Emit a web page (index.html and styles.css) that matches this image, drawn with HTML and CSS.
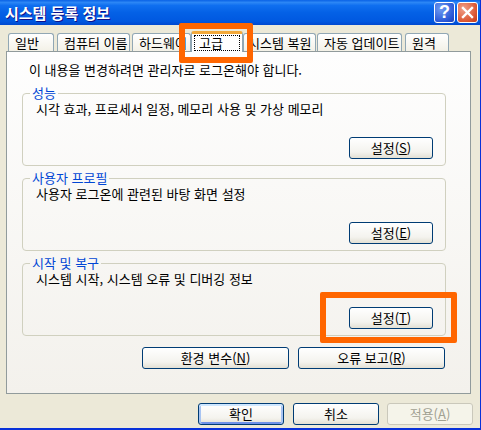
FILE: index.html
```html
<!DOCTYPE html>
<html lang="ko">
<head>
    <meta charset="UTF-8">
    <title>시스템 등록 정보</title>
    <link rel="stylesheet" href="styles.css">
</head>
<body>
    <div class="window">
        <div class="titlebar">
            <span class="title">시스템 등록 정보</span>
            <div class="title-buttons">
                <span class="title-btn help">?</span>
                <span class="title-btn close">
                    <svg width="13" height="13" viewBox="0 0 13 13"><path d="M2 2 L11 11 M11 2 L2 11" stroke="#fff" stroke-width="2.4" stroke-linecap="square"/></svg>
                </span>
            </div>
        </div>

        <div class="tabs">
            <span class="tab tab-general">일반</span>
            <span class="tab tab-name">컴퓨터 이름</span>
            <span class="tab tab-hw">하드웨어</span>
            <span class="tab tab-active"><span class="focus">고급</span></span>
            <span class="tab tab-restore">시스템 복원</span>
            <span class="tab tab-update">자동 업데이트</span>
            <span class="tab tab-remote">원격</span>
        </div>

        <div class="panel">
            <p class="intro">이 내용을 변경하려면 관리자로 로그온해야 합니다.</p>

            <fieldset class="group">
                <legend>성능</legend>
                <p class="group-text">시각 효과, 프로세서 일정, 메모리 사용 및 가상 메모리</p>
                <div class="group-actions"><button class="btn btn-small">설정(<u>S</u>)</button></div>
            </fieldset>

            <fieldset class="group">
                <legend>사용자 프로필</legend>
                <p class="group-text">사용자 로그온에 관련된 바탕 화면 설정</p>
                <div class="group-actions"><button class="btn btn-small">설정(<u>E</u>)</button></div>
            </fieldset>

            <fieldset class="group">
                <legend>시작 및 복구</legend>
                <p class="group-text">시스템 시작, 시스템 오류 및 디버깅 정보</p>
                <div class="group-actions"><button class="btn btn-small">설정(<u>T</u>)</button></div>
            </fieldset>

            <div class="panel-actions">
                <button class="btn btn-wide">환경 변수(<u>N</u>)</button>
                <button class="btn btn-wide">오류 보고(<u>R</u>)</button>
            </div>
        </div>

        <div class="footer">
            <button class="btn btn-footer btn-default">확인</button>
            <button class="btn btn-footer">취소</button>
            <button class="btn btn-footer" disabled>적용(<u>A</u>)</button>
        </div>

        <!-- Orange callouts drawn over the dialog -->
        <div class="callout callout-tab"></div>
        <div class="callout callout-button"></div>
    </div>
</body>
</html>
```

FILE: styles.css
```css
* {
    box-sizing: border-box;
}
body {
    margin: 0;
    font-family: "Noto Sans CJK KR", "Liberation Sans", sans-serif;
    font-size: 13px;
    color: #000;
}
p {
    margin: 0;
}
.window {
    position: relative;
    width: 481px;
    height: 430px;
    background-color: #ece9d8;
    border-right: 1px solid #0831d9;
    border-bottom: 2px solid #0831d9;
    overflow: hidden;
}

/* Title bar */
.titlebar {
    display: flex;
    justify-content: space-between;
    align-items: center;
    height: 25px;
    padding: 0 2px 0 5px;
    background: linear-gradient(#0a62e6 0%, #2b86f5 10%, #0f6ff0 22%, #0461e6 50%, #0058e0 85%, #0048cf 100%);
}
.title {
    color: #fff;
    font-size: 15px;
    font-weight: bold;
    line-height: 20px;
    text-shadow: 1px 1px #0f1089;
}
.title-buttons {
    display: flex;
    gap: 2px;
}
.title-btn {
    display: flex;
    justify-content: center;
    align-items: center;
    width: 21px;
    height: 21px;
    border: 1px solid #fff;
    border-radius: 3px;
    color: #fff;
    font-family: "Liberation Sans", sans-serif;
    font-size: 18px;
    font-weight: bold;
}
.help {
    background: radial-gradient(circle at 30% 30%, #6f9cf2, #2a57d6 70%, #1d3fb8);
}
.close {
    background: radial-gradient(circle at 30% 30%, #f0a08a, #dd5a36 65%, #c23a17);
}

/* Tabs */
.tabs {
    display: flex;
    align-items: flex-end;
    height: 26px;
    padding-left: 8px;
}
.tab {
    height: 18px;
    padding-left: 6px;
    margin-right: 3px;
    line-height: 17px;
    white-space: nowrap;
    border: 1px solid #91a7b4;
    border-bottom: none;
    border-radius: 3px 3px 0 0;
    background: linear-gradient(#fff, #f3f1e7);
}
.tab-general { width: 46px; }
.tab-name { width: 73px; margin-right: 2px; }
.tab-hw { width: 59px; margin-right: 0; }
.tab-restore { width: 73px; margin-right: 1px; padding-left: 4px; }
.tab-update { width: 85px; }
.tab-remote { width: 44px; margin-right: 0; }
.tab-active {
    position: relative;
    z-index: 1;
    width: 52px;
    height: 21px;
    margin-right: 0;
    margin-bottom: -1px;
    padding: 1px 2px 2px;
    border-top: 3px solid #f2a93b;
    border-color: #f2a93b #91a7b4 #fff;
    background: #fff;
}
.focus {
    display: block;
    height: 16px;
    padding-left: 4px;
    line-height: 14px;
    border: 1px dotted #000;
}

/* Main panel */
.panel {
    height: 343px;
    margin: 0 9px 0 6px;
    padding: 11px 24px 0 15px;
    border: 1px solid #919b9c;
    background: linear-gradient(#fefefe, #f3f1ec);
}
.intro {
    margin: 0 0 9px 7px;
    line-height: 14px;
}
.group {
    margin: 0 0 5px;
    padding: 2px 12px 6px 13px;
    min-width: 0;
    border: 1px solid #d0d0bf;
    border-radius: 4px;
}
.group legend {
    margin-left: -6px;
    padding: 0 2px;
    color: #0046d5;
    line-height: 14px;
}
.group-text {
    line-height: 14px;
}
.group-actions {
    display: flex;
    justify-content: flex-end;
    margin-top: 21px;
}
.panel-actions {
    display: flex;
    justify-content: flex-end;
    gap: 9px;
    margin: 11px 1px 0 0;
}

/* Footer */
.footer {
    display: flex;
    justify-content: flex-end;
    gap: 8px;
    margin-top: 9px;
    padding-right: 7px;
}

/* Buttons */
.btn {
    height: 22px;
    padding: 0;
    font-family: inherit;
    font-size: 13px;
    line-height: 18px;
    color: #000;
    border: 1px solid #003c74;
    border-radius: 3px;
    background: linear-gradient(#fff, #f4f3ee 70%, #e3e0d4);
}
.btn-small { width: 84px; }
.btn-wide { width: 147px; }
.btn-footer { width: 86px; }
.btn-default {
    margin-right: 1px;
    box-shadow: inset 0 2px #cee7ff, inset 2px 0 #a8c4f2, inset -2px 0 #a8c4f2, inset 0 -2px #6f92e8;
}
.btn:disabled {
    color: #a1a192;
    border-color: #cac8bb;
    background: #f5f4ea;
}

/* Callouts */
.callout {
    position: absolute;
    border: 6px solid #ff6600;
    border-radius: 2px;
}
.callout-tab {
    left: 179px;
    top: 23px;
    width: 74px;
    height: 40px;
}
.callout-button {
    left: 320px;
    top: 292px;
    width: 137px;
    height: 51px;
}
```
